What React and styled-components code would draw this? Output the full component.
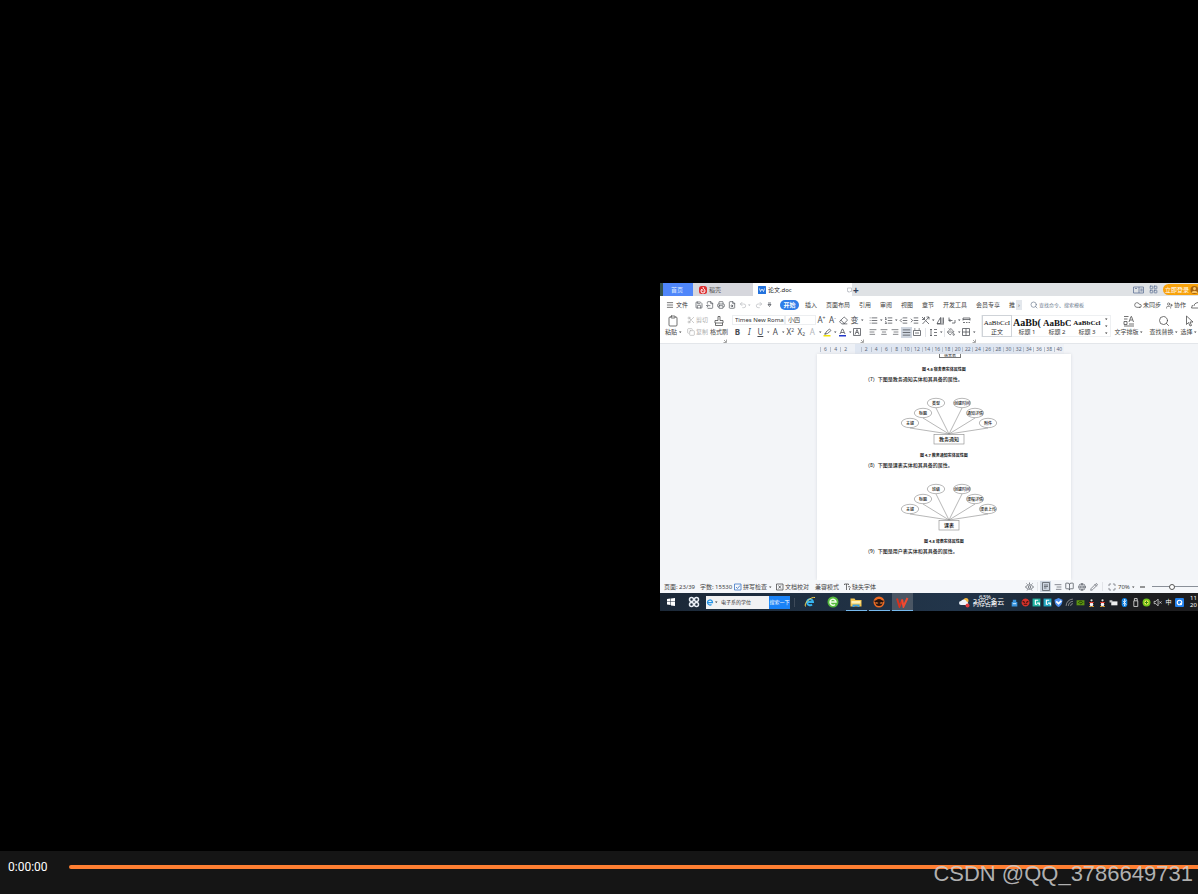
import React from "react"
import styled, { createGlobalStyle, css } from "styled-components"
import {
  AlignCenter,
  AlignJustify,
  AlignLeft,
  AlignRight,
  BookOpen,
  Clipboard,
  Cloud,
  Copy,
  Eraser,
  FileOutput,
  FileSearch,
  Globe,
  IndentDecrease,
  IndentIncrease,
  LayoutGrid,
  List,
  ListOrdered,
  Maximize,
  Menu,
  MousePointer2,
  PaintBucket,
  Pencil,
  Printer,
  Redo2,
  Save,
  Scissors,
  Search,
  Undo2,
  UserPlus,
} from "lucide-react"

const GlobalStyle = createGlobalStyle`
  * {
    box-sizing: border-box;
  }

  body {
    margin: 0;
    background: #000;
    font-family: "Noto Sans", "Noto Sans CJK SC", sans-serif;
  }

  button, input, select {
    font: inherit;
    color: inherit;
    margin: 0;
    padding: 0;
    border: none;
    background: none;
    border-radius: 0;
  }

  svg {
    display: block;
    flex: none;
  }
`

// Player
const Player = styled.div`
  position: relative;
  display: flex;
  flex-direction: column;
  min-height: 100vh;
  overflow: hidden;
`

const Stage = styled.main`
  flex: 1;
  display: flex;
  align-items: center;
  justify-content: flex-end;
  padding: 43px 0 0 calc(55% + 1px);
`

const Controls = styled.footer`
  display: flex;
  align-items: center;
  height: 43px;
  padding: 0 0 11px 8px;
  background: #151515;
  color: #fff;
  font-family: Roboto, sans-serif;
  font-size: 12px;
`

const Elapsed = styled.time`
  width: 61px;
  flex: none;
`

const Seek = styled.input`
  flex: 1;
  min-width: 0;
  height: 4px;
  appearance: none;
  background: #ff7f32;
  border-radius: 2px 0 0 2px;

  &::-webkit-slider-thumb {
    appearance: none;
    width: 0;
    height: 0;
  }
`

const Watermark = styled.div`
  position: absolute;
  right: 5px;
  bottom: 7px;
  color: rgba(205, 205, 205, 0.85);
  font-family: "Liberation Sans", sans-serif;
  font-size: 22px;
  line-height: 26px;
  white-space: nowrap;
`

// Editor window
const Editor = styled.section`
  flex: 1;
  min-width: 0;
  overflow: hidden;
  white-space: nowrap;
  background: #fff;
  color: #333;
  font-size: 6px;
  line-height: 8px;
`

const TabBar = styled.nav`
  display: flex;
  align-items: center;
  height: 13px;
  background: #dfe2e5;
  border-left: 3px solid #35524c;
`

const Tab = styled.button`
  display: flex;
  align-items: center;
  gap: 2px;
  height: 13px;
  width: ${(p) => p.$w}px;
  padding-left: ${(p) => p.$pad || 5}px;
  ${(p) => p.$kind === "home" && css`
    background: #4f86fa;
    color: #dce8ff;
  `}
  ${(p) => p.$kind === "plain" && css`
    background: #d6d7dd;
    color: #555;
  `}
  ${(p) => p.$kind === "open" && css`
    background: #fff;
    color: #222;
  `}
`

const TabPin = styled.svg`
  margin-left: auto;
`

const NewTab = styled.button`
  width: 8px;
  font-size: 10px;
  font-weight: 700;
  color: #34435e;
`

const TabTools = styled.div`
  display: flex;
  align-items: center;
  gap: 5px;
  margin-left: auto;
  color: #5b6f93;
`

const Login = styled.button`
  display: flex;
  align-items: center;
  gap: 1px;
  height: 11px;
  padding-left: 2px;
  border-radius: 6px 0 0 6px;
  background: #f8a20b;
  color: #fff;
`

const MenuBar = styled.nav`
  display: flex;
  align-items: center;
  height: 18px;
  padding-left: 6px;
`

const FileMenu = styled.button`
  display: flex;
  align-items: center;
  gap: 2px;
  width: 28px;
`

const QuickTools = styled.div`
  display: flex;
  align-items: center;
  gap: 1px;
  width: 86px;
  color: #555;
`

const QuickTool = styled.button`
  display: flex;
  align-items: center;
  justify-content: center;
  width: ${(p) => p.$w || 10}px;
  color: ${(p) => (p.$dim ? "#b5b8bd" : "#4a4e55")};
`

const MenuTabs = styled.div`
  display: flex;
  align-items: center;
  gap: 9px;
  color: #444;
`

const MenuTab = styled.button`
  ${(p) => p.$active && css`
    height: 10px;
    width: 19px;
    margin-right: -3px;
    border-radius: 5px;
    background: #2f7de8;
    color: #fff;
    font-weight: 700;
  `}
`

const MoreTabs = styled.button`
  width: 6px;
  height: 10px;
  margin-left: 1px;
  background: #e3e7ec;
  color: #555;
`

const SearchBox = styled.label`
  display: flex;
  align-items: center;
  gap: 1px;
  margin-left: 8px;
  color: #6c7a8e;
  font-size: 5px;

  input {
    width: 60px;
  }

  input::placeholder {
    color: #6c7a8e;
  }
`

const MenuActions = styled.div`
  display: flex;
  align-items: center;
  gap: 5px;
  margin-left: auto;
  color: #444;
`

const Action = styled.button`
  display: flex;
  align-items: center;
  gap: 1px;
`

// Ribbon
const Ribbon = styled.div`
  display: flex;
  height: 30px;
  border-bottom: 1px solid #e3e6ea;
`

const Group = styled.div`
  display: flex;
  flex-direction: column;
  flex: none;
  margin-left: ${(p) => p.$gap || 0}px;
`

const Row = styled.div`
  display: flex;
  align-items: center;
  height: 12px;
`

const BigTool = styled.div`
  display: flex;
  flex-direction: column;
  align-items: center;
  flex: none;
  width: ${(p) => p.$w}px;
  height: 24px;
  gap: 1px;
  padding-top: 1px;
  color: #444;
`

const SmallTool = styled.button`
  display: flex;
  align-items: center;
  gap: 1px;
  width: 24px;
  color: #b0b0b0;
`

const Tool = styled.button`
  display: flex;
  align-items: center;
  flex: none;
  width: ${(p) => p.$w || 11}px;
  height: 11px;
  color: #484b52;
  font-size: 8px;
  background: ${(p) => (p.$on ? "#cfd6e0" : "none")};
`

const Glyph = styled.span`
  display: flex;
  align-items: center;
  justify-content: center;
  width: 11px;
  height: 9px;
  line-height: 8px;
  font-weight: ${(p) => (p.$bold ? 700 : 400)};
  font-style: ${(p) => (p.$italic ? "italic" : "normal")};
  text-decoration: ${(p) => (p.$underline ? "underline" : "none")};
  color: ${(p) => p.$color || "inherit"};

  sup, sub {
    font-size: 5px;
    line-height: 5px;
  }

  sup {
    align-self: flex-start;
  }

  sub {
    align-self: flex-end;
  }
`

const FontSelect = styled.select`
  appearance: none;
  width: ${(p) => p.$w}px;
  height: 10px;
  padding-left: 2px;
  border: 1px solid #eceef0;
  color: #333;
`

const Divider = styled.i`
  width: 1px;
  height: 9px;
  margin: 0 ${(p) => p.$m || 1}px;
  background: ${(p) => (p.$dark ? "#3d4a59" : "#e2e4e8")};
`

const Launcher = styled.svg`
  align-self: flex-end;
  margin-left: -4px;
`

const Styles = styled.div`
  display: flex;
  align-items: center;
  height: 22px;
  margin: 1px 0 0 5px;
  border: 1px solid #eef0f2;
`

const StyleCard = styled.button`
  width: 30px;
  height: 22px;
  overflow: hidden;
  border: 1px solid ${(p) => (p.$on ? "#cfd3d8" : "transparent")};
  color: #333;

  b {
    display: block;
    height: 11px;
    line-height: 12px;
    overflow: hidden;
    font-family: "Liberation Serif", serif;
    font-size: ${(p) => p.$size}px;
    font-weight: ${(p) => (p.$on ? 400 : 700)};
    color: #111;
  }
`

const StyleScroll = styled.div`
  display: flex;
  flex-direction: column;
  justify-content: space-between;
  width: 8px;
  height: 18px;
  align-items: center;
`

// Document
const Workspace = styled.div`
  height: 236px;
  overflow: hidden;
  padding-left: 157px;
  background: #f3f5f8;
`

const Ruler = styled.div`
  display: grid;
  grid-template-columns: repeat(24, 1fr);
  align-items: center;
  width: 244px;
  height: 10px;
  margin-left: 3px;
  color: #5a6576;
  font-size: 5px;
  text-align: center;
  background: linear-gradient(90deg, #eef1f6 35px, #dfe6f1 35px, #dfe6f1 210px, #eef1f6 210px);

  span {
    border-left: 1px solid #b9c2d0;
    line-height: 5px;
  }
`

const Page = styled.article`
  width: 254px;
  height: 226px;
  background: #fff;
  box-shadow: 0 0 3px #d8dbe0;
  color: #222;
  font-family: "Noto Sans CJK SC", sans-serif;
`

const CutBox = styled.div`
  width: 22px;
  height: 4px;
  margin-left: 122px;
  overflow: hidden;
  border: 1px solid #777;
  border-top: none;
  font-size: 4px;
  line-height: 2px;
  text-align: center;
`

const Figure = styled.figure`
  margin: 0;
  padding-top: ${(p) => p.$top || 0}px;

  svg {
    margin-left: 81px;
  }

  figcaption {
    font-size: 4px;
    line-height: 10px;
    font-weight: 700;
    text-align: center;
    word-break: keep-all;
  }
`

const Line = styled.p`
  margin: 0;
  padding-left: 48px;
  font-size: 5px;
  line-height: 10px;
  font-weight: 500;
`

// Status bar
const StatusBar = styled.div`
  display: flex;
  align-items: center;
  height: 13px;
  padding-left: 4px;
  background: #f5f7fa;
  color: #444;
`

const Status = styled.span`
  display: flex;
  align-items: center;
  gap: 1px;
  flex: none;
  width: ${(p) => p.$w}px;
`

const ViewTools = styled.div`
  display: flex;
  align-items: center;
  gap: 1px;
  margin-left: auto;
`

const ViewTool = styled.button`
  display: flex;
  align-items: center;
  justify-content: center;
  width: 11px;
  height: 11px;
  color: #50555e;
  background: ${(p) => (p.$on ? "#ccd5e0" : "none")};
`

const Zoom = styled.input`
  appearance: none;
  width: 46px;
  height: 1px;
  margin-left: 3px;
  background: #8a9099;

  &::-webkit-slider-thumb {
    appearance: none;
    width: 6px;
    height: 6px;
    border: 1px solid #555;
    border-radius: 50%;
    background: #fff;
  }
`

// Taskbar
const TaskBar = styled.div`
  display: flex;
  align-items: center;
  height: 18px;
  background: linear-gradient(90deg, #1c2938 0%, #22354a 55%, #1c2632 75%, #1d1d1f 88%);
  color: #fff;
`

const TaskButton = styled.button`
  display: flex;
  align-items: center;
  justify-content: center;
  flex: none;
  width: ${(p) => p.$w || 21}px;
  height: 18px;
  margin: 0 1px;
  background: ${(p) => (p.$on ? "#4a5664" : "none")};
  box-shadow: ${(p) => (p.$open ? "inset 0 -1px #76b9ed" : "none")};
`

const TaskSearch = styled.form`
  display: flex;
  align-items: center;
  flex: none;
  width: 84px;
  height: 13px;
  background: #f1f2f3;
  color: #333;
  font-size: 5px;

  input {
    width: 46px;
    margin-left: 3px;
    color: #333;
  }

  button {
    width: 21px;
    height: 13px;
    margin-left: auto;
    background: #1a83f7;
    color: #fff;
  }
`

const Weather = styled.div`
  display: flex;
  align-items: center;
  gap: 3px;
  width: 51px;
  margin-left: auto;
  font-size: 7px;
`

const Forecast = styled.span`
  position: relative;
`

const Memory = styled.small`
  position: absolute;
  left: 0;
  top: -4px;
  font-size: 6px;
  line-height: 7px;
  text-align: center;
`

const Tray = styled.div`
  display: flex;
  align-items: center;
  gap: 2px;

  span {
    width: 9px;
    text-align: center;
  }
`

const Clock = styled.div`
  width: 8px;
  margin-left: 6px;
  line-height: 7px;
`

const Caret = () => (
  <svg width="4" height="4" viewBox="0 0 8 8" aria-hidden="true">
    <path d="M2 3h5L4.500 6z" fill="currentColor" />
  </svg>
)

const Corner = () => (
  <Launcher width="4" height="4" viewBox="0 0 8 8" aria-hidden="true">
    <path d="M7 1v6H1M2 2l4 4" fill="none" stroke="#888" strokeWidth="1.500" />
  </Launcher>
)

const CloudSun = () => (
  <svg width="11" height="11" viewBox="0 0 22 22">
    <circle cx="14" cy="7" r="5" fill="#f6b73c" />
    <path d="M4 16a4 4 0 0 1 0-8 6 6 0 0 1 11 1 4 4 0 0 1 2 7z" fill="#eef3fa" />
    <circle cx="17" cy="17" r="4" fill="#e0393e" />
  </svg>
)

const quick = [
  ["保存", Save], ["输出", FileOutput], ["打印", Printer], ["预览", FileSearch],
]

const menus = ["插入", "页面布局", "引用", "审阅", "视图", "章节", "开发工具", "会员专享", "推"]

const styles = [
  ["AaBbCcI", "正文", 7, true],
  ["AaBb(", "标题 1", 10],
  ["AaBbC", "标题 2", 9],
  ["AaBbCcl", "标题 3", 7],
]

const ruler = ["6", "4", "2", ""].concat(Array.from({ length: 20 }, (_, i) => String(i * 2 + 2)))

const spots = [[12, 28], [25, 18], [38, 8], [64, 8], [77, 18], [90, 28]]

function EntityDiagram({ entity, labels, wide }) {
  const half = wide ? 15 : 10
  return (
    <svg width="104" height="55" viewBox="0 0 104 55" role="img" aria-label={entity}>
      <g fill="none" stroke="#888" strokeWidth="0.6">
        {spots.map(([x, y]) => (
          <g key={x}>
            <ellipse cx={x} cy={y} rx="8.700" ry="4.700" />
            <path d={`M${x} ${y + 5}L51 39`} />
          </g>
        ))}
        <rect x={51 - half} y="39.500" width={half * 2} height="9.500" />
      </g>
      <g fill="#111" fontSize="4" fontWeight="500" textAnchor="middle">
        {spots.map(([x, y], i) => (
          <text key={x} x={x} y={y + 1.5}>{labels[i]}</text>
        ))}
        <text x="51" y="46" fontSize="5">{entity}</text>
      </g>
    </svg>
  )
}

// Tray icons, one small coloured mark each
const tray = [
  ["#3a94dc", "M3 7h10v8H3zM5 7V3h6v4"],
  ["#d5332b", "M8 1a7 7 0 1 0 .1 0z"],
  ["#21b3a2", "M1 1h14v14H1z"],
  ["#21a7c2", "M1 1h14v14H1z"],
  ["#4c8ff0", "M8 0l7 3c0 7-2 10-7 13C3 13 1 10 1 3z"],
]

function TrayIcons() {
  return (
    <Tray>
      {tray.map(([color, d], i) => (
        <svg key={i} width="9" height="9" viewBox="0 0 16 16">
          <path d={d} fill={color} />
          {i === 0 && <path d="M5 10h6" stroke="#bfe3ff" strokeWidth="2" />}
          {i === 1 && <path d="M3 6l4 2M13 6L9 8M5 11h6" stroke="#401010" strokeWidth="2" />}
          {(i === 2 || i === 3) && <path d="M11 4H6v7h3M9 9h4v4" stroke="#fff" strokeWidth="2" fill="none" />}
          {i === 4 && <path d="M4 6l4 4 5-5" stroke="#fff" strokeWidth="3" fill="none" />}
        </svg>
      ))}
      <svg width="9" height="9" viewBox="0 0 16 16" fill="none" stroke="#999" strokeWidth="1.500">
        <path d="M2 14A12 12 0 0 1 14 2M6 14a8 8 0 0 1 8-8M10 14a4 4 0 0 1 4-4" />
      </svg>
      <svg width="9" height="9" viewBox="0 0 16 16">
        <path d="M1 4h14v9H1z" fill="#5c9412" />
        <path d="M4 9c2-4 6-4 8-1-2 3-5 3-6 1" stroke="#173300" fill="none" strokeWidth="1.500" />
      </svg>
      {[0, 1].map((i) => (
        <svg key={i} width="9" height="9" viewBox="0 0 16 16">
          <path d="M8 1c4 0 4 4 4 6l2 5H2l2-5c0-2 0-6 4-6z" fill="#16181c" />
          <ellipse cx="8" cy="11" rx="3" ry="4" fill="#f5f5f5" />
          <path d="M4 7h8v2H4z" fill="#e53c2e" />
          <path d="M4 14h3v2H4zM9 14h3v2H9z" fill="#f0a62a" />
          <circle cx="8" cy="4" r="2" fill="#ddd" />
        </svg>
      ))}
      <svg width="9" height="9" viewBox="0 0 16 16">
        <path d="M4 6h11v7H4z" fill="#eee" />
        <path d="M1 4h5v4H1z" fill="#ccc" />
      </svg>
      <svg width="9" height="9" viewBox="0 0 16 16">
        <rect x="3" width="10" height="16" rx="5" fill="#0d7fe0" />
        <path d="M5 5l6 6-3 3V2l3 3-6 6" stroke="#fff" fill="none" strokeWidth="1.300" />
      </svg>
      <svg width="9" height="9" viewBox="0 0 16 16" fill="none" stroke="#ddd" strokeWidth="1.500">
        <path d="M5 5h7v10H5zM6 5V1h5v4" />
      </svg>
      <svg width="9" height="9" viewBox="0 0 16 16">
        <circle cx="8" cy="8" r="7" fill="#71c51b" />
        <circle cx="8" cy="8" r="4" fill="#fff25c" />
        <path d="M8 5v6M5 8h6" stroke="#3b8a13" strokeWidth="2" />
      </svg>
      <svg width="9" height="9" viewBox="0 0 16 16" fill="none" stroke="#ddd" strokeWidth="1.400">
        <path d="M2 6h3l4-4v12l-4-4H2zM11 6l4 4M15 6l-4 4" />
      </svg>
      <span>中</span>
      <svg width="9" height="9" viewBox="0 0 16 16">
        <rect width="16" height="16" rx="2" fill="#2382ee" />
        <circle cx="8" cy="8" r="4" fill="none" stroke="#fff" strokeWidth="2" />
        <path d="M9 9l3 3" stroke="#fff" strokeWidth="2" />
      </svg>
    </Tray>
  )
}

function EditorTabs() {
  return (
    <TabBar>
      <Tab $kind="home" $w={30} $pad={8}>首页</Tab>
      <Tab $kind="plain" $w={60} $pad={6}>
        <svg width="8" height="8" viewBox="0 0 16 16">
          <rect width="16" height="16" rx="5" fill="#df2f2f" />
          <path d="M8 2c0 4 4 4 4 8a4 4 0 0 1-8 0c0-2 1-3 2-4 0 2 1 3 3 4" stroke="#fff" strokeWidth="2" fill="none" />
        </svg>
        稻壳
      </Tab>
      <Tab $kind="open" $w={99}>
        <svg width="8" height="8" viewBox="0 0 16 16">
          <rect width="16" height="16" rx="1" fill="#2372dd" />
          <path d="M3 5l2 6 3-5 3 5 2-6" stroke="#fff" strokeWidth="1.500" fill="none" />
        </svg>
        论文.doc
        <TabPin width="5" height="6" viewBox="0 0 10 12" fill="none" stroke="#b5bac2" strokeWidth="1.500">
          <path d="M1 2h8v7H6l-2 2V9H1z" />
        </TabPin>
      </Tab>
      <NewTab aria-label="新建">+</NewTab>
      <TabTools>
        <svg width="11" height="8" viewBox="0 0 22 16" fill="none" stroke="currentColor" strokeWidth="1.500">
          <path d="M1 2h20v12H1zM12 2v12M16 5v6M18 5v6M4 5h4" />
        </svg>
        <LayoutGrid size={9} />
        <Login>
          立即登录
          <svg width="8" height="10" viewBox="0 0 16 20">
            <circle cx="9" cy="10" r="8" fill="#a86410" />
            <circle cx="9" cy="7" r="3" fill="#f9c667" />
            <path d="M3 16c1-6 11-6 12 0z" fill="#f9c667" />
          </svg>
        </Login>
      </TabTools>
    </TabBar>
  )
}

function EditorMenu() {
  return (
    <MenuBar>
      <FileMenu><Menu size={8} />文件</FileMenu>
      <QuickTools>
        {quick.map(([label, Icon]) => (
          <QuickTool key={label} aria-label={label}><Icon size={8} /></QuickTool>
        ))}
        <QuickTool $dim $w={15} aria-label="撤销"><Undo2 size={8} /><Caret /></QuickTool>
        <QuickTool $dim aria-label="恢复"><Redo2 size={8} /></QuickTool>
        <QuickTool aria-label="更多">
          <svg width="5" height="6" viewBox="0 0 10 12" fill="none" stroke="currentColor" strokeWidth="1.500">
            <path d="M2 2h6M2 5h6L5 9z" />
          </svg>
        </QuickTool>
      </QuickTools>
      <MenuTabs>
        <MenuTab $active>开始</MenuTab>
        {menus.map((m) => <MenuTab key={m}>{m}</MenuTab>)}
      </MenuTabs>
      <MoreTabs aria-label="更多选项卡">›</MoreTabs>
      <SearchBox>
        <Search size={8} />
        <input aria-label="查找" placeholder="查找命令、搜索模板" />
      </SearchBox>
      <MenuActions>
        <Action><Cloud size={8} />未同步</Action>
        <Action><UserPlus size={7} />协作</Action>
        <Action aria-label="分享">
          <svg width="7" height="8" viewBox="0 0 14 16" fill="none" stroke="currentColor" strokeWidth="1.500">
            <path d="M14 3C8 4 6 7 6 10M3 8L1 14h13" />
          </svg>
        </Action>
      </MenuActions>
    </MenuBar>
  )
}

function EditorRibbon() {
  return (
    <Ribbon>
      <BigTool $w={27}>
        <Clipboard size={12} strokeWidth={1.5} />
        <Action>粘贴<Caret /></Action>
      </BigTool>
      <Group>
        <Row><SmallTool><Scissors size={8} />剪切</SmallTool></Row>
        <Row><SmallTool><Copy size={8} />复制</SmallTool></Row>
      </Group>
      <BigTool $w={16}>
        <svg width="12" height="12" viewBox="0 0 24 24" fill="none" stroke="currentColor" strokeWidth="1.500">
          <path d="M10 3h4v8h6v5H4v-5h6zM5 16v5h14v-5" />
        </svg>
        <Action>格式刷</Action>
      </BigTool>
      <Corner />
      <Group $gap={5}>
        <Row>
          <FontSelect $w={53} aria-label="字体"><option>Times New Roma ▾</option></FontSelect>
          <FontSelect $w={31} aria-label="字号"><option>小四</option></FontSelect>
          <Tool aria-label="增大字号"><Glyph>A<sup>+</sup></Glyph></Tool>
          <Tool aria-label="减小字号"><Glyph>A<sup>-</sup></Glyph></Tool>
          <Tool aria-label="清除格式"><Glyph><Eraser size={9} /></Glyph></Tool>
          <Tool $w={15} aria-label="拼音指南"><Glyph>变</Glyph><Caret /></Tool>
        </Row>
        <Row>
          <Tool $w={12}><Glyph $bold>B</Glyph></Tool>
          <Tool><Glyph $italic>I</Glyph></Tool>
          <Tool $w={15}><Glyph $underline>U</Glyph><Caret /></Tool>
          <Tool $w={15}><Glyph>A</Glyph><Caret /></Tool>
          <Tool><Glyph>X<sup>2</sup></Glyph></Tool>
          <Tool><Glyph>X<sub>2</sub></Glyph></Tool>
          <Tool $w={15}><Glyph $color="#b5b8bd">A</Glyph><Caret /></Tool>
          <Tool $w={15} aria-label="突出显示">
            <Glyph>
              <svg width="9" height="9" viewBox="0 0 18 18">
                <path d="M5 12l1-4 7-6 3 3-7 6zM2 12h4" fill="none" stroke="currentColor" strokeWidth="1.500" />
                <path d="M1 14h14v3H1z" fill="#f2e205" />
              </svg>
            </Glyph>
            <Caret />
          </Tool>
          <Tool $w={15} aria-label="字体颜色">
            <Glyph>
              <svg width="9" height="9" viewBox="0 0 18 18">
                <path d="M4 12L8.500 2h1L14 12M6 9h6" fill="none" stroke="currentColor" strokeWidth="1.500" />
                <path d="M2 14h14v3H2z" fill="#2438c9" />
              </svg>
            </Glyph>
            <Caret />
          </Tool>
          <Tool aria-label="字符底纹">
            <Glyph>
              <svg width="8" height="8" viewBox="0 0 16 16" fill="none" stroke="currentColor" strokeWidth="1.500">
                <path d="M1 1h14v14H1zM4 13l4-10 4 10M6 9h4" />
              </svg>
            </Glyph>
          </Tool>
        </Row>
      </Group>
      <Corner />
      <Group $gap={4}>
        <Row>
          <Tool $w={15} aria-label="项目符号"><Glyph><List size={9} /></Glyph><Caret /></Tool>
          <Tool $w={15} aria-label="编号"><Glyph><ListOrdered size={9} /></Glyph><Caret /></Tool>
          <Tool aria-label="减少缩进"><Glyph><IndentDecrease size={9} /></Glyph></Tool>
          <Tool aria-label="增加缩进"><Glyph><IndentIncrease size={9} /></Glyph></Tool>
          <Tool $w={15} aria-label="中文版式">
            <Glyph>
              <svg width="9" height="9" viewBox="0 0 18 18" fill="none" stroke="currentColor" strokeWidth="1.500">
                <path d="M2 2l5 5M16 2L3 16M9 9l7 7M2 7h5V2M11 2h5v5" />
              </svg>
            </Glyph>
            <Caret />
          </Tool>
          <Tool aria-label="排序">
            <Glyph>
              <svg width="9" height="9" viewBox="0 0 18 18" fill="none" stroke="currentColor" strokeWidth="1.500">
                <path d="M2 15L9 3v12zM12 3v12M15 3v12M2 16h14" />
              </svg>
            </Glyph>
          </Tool>
          <Tool $w={15} aria-label="显示标记">
            <Glyph>
              <svg width="9" height="9" viewBox="0 0 18 18" fill="none" stroke="currentColor" strokeWidth="1.500">
                <path d="M4 3v6h7M4 9l3-3M4 9l3 3M10 14h6V8" />
              </svg>
            </Glyph>
            <Caret />
          </Tool>
          <Tool aria-label="制表位">
            <Glyph>
              <svg width="9" height="9" viewBox="0 0 18 18" fill="none" stroke="currentColor" strokeWidth="1.500">
                <path d="M2 9V4h14v5M2 7h14M2 13h4M8 13h3M13 13h3" />
              </svg>
            </Glyph>
          </Tool>
        </Row>
        <Row>
          <Tool aria-label="左对齐"><Glyph><AlignLeft size={8} /></Glyph></Tool>
          <Tool aria-label="居中"><Glyph><AlignCenter size={8} /></Glyph></Tool>
          <Tool aria-label="右对齐"><Glyph><AlignRight size={8} /></Glyph></Tool>
          <Tool $on aria-label="两端对齐"><Glyph><AlignJustify size={9} /></Glyph></Tool>
          <Tool aria-label="分散对齐">
            <Glyph>
              <svg width="8" height="8" viewBox="0 0 16 16" fill="none" stroke="currentColor" strokeWidth="1.500">
                <path d="M1 5h14v10H1zM4 10h8M2 2h3M11 2h3" />
              </svg>
            </Glyph>
          </Tool>
          <Divider $m={2} />
          <Tool $w={15} aria-label="行距">
            <Glyph>
              <svg width="9" height="9" viewBox="0 0 18 18" fill="none" stroke="currentColor" strokeWidth="1.500">
                <path d="M4 2v14M2 4l2-2 2 2M2 14l2 2 2-2M10 3h6M10 9h6M10 15h6" />
              </svg>
            </Glyph>
            <Caret />
          </Tool>
          <Divider />
          <Tool $w={15} aria-label="底纹颜色"><Glyph><PaintBucket size={8} /></Glyph><Caret /></Tool>
          <Tool $w={15} aria-label="边框">
            <Glyph>
              <svg width="8" height="8" viewBox="0 0 16 16" fill="none" stroke="currentColor" strokeWidth="1.500">
                <path d="M1 1h14v14H1zM8 1v14M1 8h14" />
              </svg>
            </Glyph>
            <Caret />
          </Tool>
        </Row>
      </Group>
      <Corner />
      <Styles>
        {styles.map(([sample, name, size, on]) => (
          <StyleCard key={name} $size={size} $on={on}><b>{sample}</b>{name}</StyleCard>
        ))}
        <StyleScroll><Caret /><Caret /><Caret /></StyleScroll>
      </Styles>
      <BigTool $w={36}>
        <svg width="12" height="12" viewBox="0 0 24 24" fill="none" stroke="currentColor" strokeWidth="1.500">
          <path d="M2 3h9M2 8h7M12 14l4-11h1l4 11M14 10h5M2 13h6v6H2zM12 18h10M2 22h20" />
        </svg>
        <Action>文字排版<Caret /></Action>
      </BigTool>
      <BigTool $w={34}>
        <Search size={12} strokeWidth={1.5} />
        <Action>查找替换<Caret /></Action>
      </BigTool>
      <BigTool $w={16}>
        <svg width="12" height="12" viewBox="0 0 24 24" fill="none" stroke="currentColor" strokeWidth="1.500">
          <path d="M7 2v17l4-4 3 7 3-1-3-7h6z" />
        </svg>
        <Action>选择<Caret /></Action>
      </BigTool>
    </Ribbon>
  )
}

function Document() {
  return (
    <Workspace>
      <Ruler>{ruler.map((n, i) => <span key={i}>{n}</span>)}</Ruler>
      <Page>
        <CutBox>宿舍表</CutBox>
        <Figure $top={6}><figcaption>图 4.6 宿舍表实体属性图</figcaption></Figure>
        <Line>（7）下图是教务通知实体和其具备的属性。</Line>
        <Figure $top={11}>
          <EntityDiagram
            wide
            entity="教务通知"
            labels={["主键", "标题", "类型", "创建时间", "通知详情", "附件"]}
          />
          <figcaption>图 4.7 教务通知实体属性图</figcaption>
        </Figure>
        <Line>（8）下图是课表实体和其具备的属性。</Line>
        <Figure $top={11}>
          <EntityDiagram
            entity="课表"
            labels={["主键", "标题", "班级", "创建时间", "课程详情", "课表上传"]}
          />
          <figcaption>图 4.8 课表实体属性图</figcaption>
        </Figure>
        <Line>（9）下图是用户表实体和其具备的属性。</Line>
      </Page>
    </Workspace>
  )
}

function EditorStatus() {
  return (
    <StatusBar>
      <Status $w={36}>页面: 23/39</Status>
      <Status $w={34}>字数: 15530</Status>
      <Status $w={42}>
        <svg width="8" height="8" viewBox="0 0 16 16" fill="none" stroke="#2f6fc4" strokeWidth="1.500">
          <path d="M1 2h13v12H1zM4 8l3 3 5-6" />
        </svg>
        拼写检查<Caret />
      </Status>
      <Status $w={39}>
        <svg width="8" height="8" viewBox="0 0 16 16" fill="none" stroke="currentColor" strokeWidth="1.500">
          <path d="M1 2h13v12H1zM5 5l5 6M10 5l-5 6" />
        </svg>
        文档校对
      </Status>
      <Status $w={29}>兼容模式</Status>
      <Status $w={40}>
        <svg width="7" height="8" viewBox="0 0 14 16" fill="none" stroke="currentColor" strokeWidth="1.500">
          <path d="M1 4V2h8v2M5 2v12M8 8c4-3 6 1 3 3v3" />
        </svg>
        缺失字体
      </Status>
      <ViewTools>
        <ViewTool aria-label="护眼模式">
          <svg width="9" height="9" viewBox="0 0 18 18" fill="none" stroke="currentColor" strokeWidth="1.500">
            <path d="M1 10c4-6 12-6 16 0-4 6-12 6-16 0zM9 1v3M3 3l2 2M15 3l-2 2M4 17l1-2M14 17l-1-2" />
            <circle cx="9" cy="10" r="2.500" />
          </svg>
        </ViewTool>
        <Divider />
        <ViewTool $on aria-label="页面视图">
          <svg width="8" height="9" viewBox="0 0 16 18" fill="none" stroke="currentColor" strokeWidth="1.500">
            <path d="M1 1h14v16H1zM4 6h8M4 9h8M4 12h5" />
          </svg>
        </ViewTool>
        <ViewTool aria-label="大纲"><AlignRight size={8} /></ViewTool>
        <ViewTool aria-label="阅读版式"><BookOpen size={9} /></ViewTool>
        <ViewTool aria-label="Web版式"><Globe size={8} /></ViewTool>
        <ViewTool aria-label="写作模式"><Pencil size={8} /></ViewTool>
        <Divider $m={2} />
        <ViewTool aria-label="最佳显示比例"><Maximize size={8} /></ViewTool>
        <Status $w={18}>70%<Caret /></Status>
        <ViewTool aria-label="缩小">
          <svg width="5" height="2"><path d="M0 1h5" stroke="#333" /></svg>
        </ViewTool>
        <Zoom type="range" aria-label="显示比例" min="0" max="100" defaultValue="43" />
      </ViewTools>
    </StatusBar>
  )
}

function Browser({ color, ring }) {
  return (
    <svg width="12" height="12" viewBox="0 0 24 24" fill="none">
      {ring && <circle cx="12" cy="12" r="11" fill={color} />}
      <path d="M6 12h12a6 6 0 1 0-2 5" stroke={ring || color} strokeWidth={ring ? 3 : 4} />
      {!ring && <path d="M3 21C-1 14 14 1 22 3" stroke="#f3d04a" strokeWidth="2" />}
    </svg>
  )
}

function WindowsBar() {
  return (
    <TaskBar>
      <TaskButton aria-label="开始">
        <svg width="8" height="8" viewBox="0 0 16 16" fill="#fff">
          <path d="M0 2l7-1v6H0zM8 1l8-1v7H8zM0 8h7v6l-7-1zM8 8h8v8l-8-1z" />
        </svg>
      </TaskButton>
      <TaskButton aria-label="助手">
        <svg width="12" height="12" viewBox="0 0 24 24" fill="none" stroke="#e8eef5" strokeWidth="3">
          <circle cx="7" cy="7" r="4" />
          <circle cx="17" cy="7" r="4" />
          <circle cx="7" cy="17" r="4" />
          <circle cx="17" cy="17" r="4" />
        </svg>
      </TaskButton>
      <TaskSearch onSubmit={(e) => e.preventDefault()}>
        <svg width="8" height="8" viewBox="0 0 16 16" fill="none">
          <path d="M4 9h9a5 5 0 1 0-2 4" stroke="#2494e6" strokeWidth="2.500" />
        </svg>
        <Caret />
        <input aria-label="搜索" defaultValue="电子系的学位" />
        <button type="submit">搜索一下</button>
      </TaskSearch>
      <Divider $dark $m={4} />
      <TaskButton aria-label="IE"><Browser color="#36b4ef" /></TaskButton>
      <TaskButton aria-label="浏览器"><Browser color="#55bb3d" ring="#f2ffe9" /></TaskButton>
      <TaskButton $open aria-label="文件夹">
        <svg width="12" height="11" viewBox="0 0 24 22">
          <path d="M1 3h8l2 3h12v13H1z" fill="#f5c64f" />
          <path d="M3 8h18v5H3z" fill="#fff1b8" />
          <path d="M5 15h14v5h-4v-2H9v2H5z" fill="#3c9ee0" />
        </svg>
      </TaskButton>
      <TaskButton $open aria-label="录屏">
        <svg width="12" height="12" viewBox="0 0 24 24">
          <circle cx="12" cy="12" r="11" fill="#ee6a22" />
          <circle cx="12" cy="13" r="7" fill="#2a1712" />
          <path d="M3 9h18v3H3z" fill="#22120e" />
          <path d="M6 12l5 2-4 2zM18 12l-5 2 4 2z" fill="#fa8a3a" />
        </svg>
      </TaskButton>
      <TaskButton $open $on aria-label="WPS">
        <svg width="13" height="11" viewBox="0 0 26 22">
          <path d="M2 3l5 16 6-14" stroke="#d8321f" strokeWidth="4" fill="none" />
          <path d="M12 5l3 14L23 2" stroke="#f04a30" strokeWidth="4" fill="none" />
        </svg>
      </TaskButton>
      <Weather>
        <CloudSun />
        <Forecast>21°C 多云<Memory>63%<br />内存占用</Memory></Forecast>
      </Weather>
      <TrayIcons />
      <Clock>11<br />20</Clock>
    </TaskBar>
  )
}

function App() {
  return (
    <Player>
      <GlobalStyle />
      <Stage>
        <Editor>
          <EditorTabs />
          <EditorMenu />
          <EditorRibbon />
          <Document />
          <EditorStatus />
          <WindowsBar />
        </Editor>
      </Stage>
      <Controls>
        <Elapsed>0:00:00</Elapsed>
        <Seek type="range" aria-label="播放进度" min="0" max="100" defaultValue="0" />
      </Controls>
      <Watermark>CSDN @QQ_3786649731</Watermark>
    </Player>
  )
}

export default App
